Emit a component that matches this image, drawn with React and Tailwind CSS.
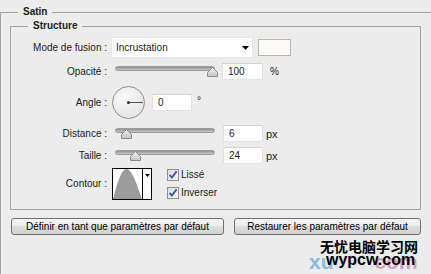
import React from "react";

function Slider({ pct }) {
  return (
    <div className="relative w-[100px] h-[17px] shrink-0">
      <div className="absolute left-0 right-0 top-[3px] h-[5px] rounded-full bg-gradient-to-b from-[#8e8e8e] to-[#c9c9c9] border border-[#9a9a9a]" />
      <svg
        className="absolute top-[4px]"
        style={{ left: `calc(${pct}% - ${pct * 0.08}px)` }}
        width="11"
        height="10"
        viewBox="0 0 11 10"
      >
        <defs>
          <linearGradient id="thumbg" x1="0" y1="0" x2="0" y2="1">
            <stop offset="0" stopColor="#f2f2f2" />
            <stop offset="1" stopColor="#c4c4c4" />
          </linearGradient>
        </defs>
        <path d="M5.5 0.5 L10.5 5.5 L10.5 9.5 L0.5 9.5 L0.5 5.5 Z" fill="url(#thumbg)" stroke="#8c8c8c" strokeWidth="1" />
      </svg>
    </div>
  );
}

function NumBox({ value, w = "w-[41px]" }) {
  return (
    <div className={`${w} h-[17px] shrink-0 bg-white border border-[#e2e2e2] border-t-[#d4d4d4] pl-[5px] leading-[15px]`}>
      {value}
    </div>
  );
}

function Check({ label }) {
  return (
    <div className="flex items-center h-[12px]">
      <svg width="12" height="12" viewBox="0 0 12 12" className="shrink-0">
        <defs>
          <linearGradient id="chk" x1="0" y1="0" x2="1" y2="1">
            <stop offset="0" stopColor="#dcdcdc" />
            <stop offset="1" stopColor="#fbfbfb" />
          </linearGradient>
        </defs>
        <rect x="0.5" y="0.5" width="11" height="11" fill="url(#chk)" stroke="#8e8f8f" />
        <path d="M2.6 6 L4.9 8.6 L9.6 2.4" fill="none" stroke="#3d5aa8" strokeWidth="1.9" />
      </svg>
      <span className="ml-[2px]">{label}</span>
    </div>
  );
}

export default function App() {
  return (
    <div className="relative w-[431px] h-[274px] overflow-hidden bg-[#ececec] font-['Liberation_Sans',Arial,sans-serif] text-[10px] text-[#1b1b1b] leading-[12px]">
      <fieldset className="mt-[6px] w-[460px] min-h-[300px] border-l border-t border-[#a3a3a3] pl-[9px] pt-[2px]">
        <legend className="ml-[8px] px-[5px] font-bold leading-[12px]">Satin</legend>

        <fieldset className="w-[411px] border border-[#a3a3a3] pb-[9px]">
          <legend className="ml-[17px] px-[5px] font-bold leading-[12px]">Structure</legend>

          {/* Mode de fusion */}
          <div className="flex items-center mt-[5px] h-[21px]">
            <span className="w-[96px] text-right">Mode de fusion :</span>
            <div className="ml-[4px] w-[142px] h-[21px] bg-white border border-[#e6e6e6] flex items-center justify-between pl-[4px] pr-[3px]">
              <span>Incrustation</span>
              <svg width="7" height="4" viewBox="0 0 7 4"><path d="M0 0 H7 L3.5 4 Z" fill="#000" /></svg>
            </div>
            <div className="ml-[5px] w-[33px] h-[17px] bg-[#fcfaf6] border border-[#b6b6b6]" />
          </div>

          {/* Opacité */}
          <div className="flex items-center mt-[5px] h-[17px]">
            <span className="w-[96px] text-right">Opacité :</span>
            <div className="ml-[8px]"><Slider pct={100} /></div>
            <div className="ml-[7px]"><NumBox value="100" /></div>
            <span className="ml-[7px]">%</span>
          </div>

          {/* Angle */}
          <div className="flex items-center mt-[6px] h-[33px]">
            <span className="w-[96px] text-right">Angle :</span>
            <div className="ml-[5px] w-[33px] h-[33px] shrink-0 rounded-full border border-[#8d8d8d] bg-[radial-gradient(circle_at_40%_35%,#fafafa,#dedede)] flex items-center">
              <svg width="31" height="31" viewBox="0 0 31 31">
                <line x1="15.5" y1="15.5" x2="30" y2="15.5" stroke="#555" strokeWidth="1" />
                <circle cx="15.5" cy="15.5" r="1.6" fill="#333" />
              </svg>
            </div>
            <div className="ml-[7px]"><NumBox value="0" w="w-[40px]" /></div>
            <span className="ml-[5px] self-start mt-[9px]">°</span>
          </div>

          {/* Distance */}
          <div className="flex items-center mt-[6px] h-[17px]">
            <span className="w-[96px] text-right">Distance :</span>
            <div className="ml-[8px]"><Slider pct={6} /></div>
            <div className="ml-[8px]"><NumBox value="6" w="w-[40px]" /></div>
            <span className="ml-[3px] text-[11px]">px</span>
          </div>

          {/* Taille */}
          <div className="flex items-center mt-[5px] h-[17px]">
            <span className="w-[96px] text-right">Taille :</span>
            <div className="ml-[8px]"><Slider pct={16} /></div>
            <div className="ml-[8px]"><NumBox value="24" w="w-[40px]" /></div>
            <span className="ml-[3px] text-[11px]">px</span>
          </div>

          {/* Contour */}
          <div className="flex items-center mt-[4px] h-[32px]">
            <span className="w-[96px] text-right">Contour :</span>
            <div className="ml-[5px] w-[40px] h-[32px] shrink-0 border border-black bg-white flex">
              <svg width="29" height="30" viewBox="0 0 29 30" className="shrink-0">
                <path d="M0 30 C4 16 8 0 13.5 0 C19 0 24 16 29 30 Z" fill="#9b9b9b" />
              </svg>
              <div className="w-px bg-black" />
              <div className="flex-1 flex justify-center pt-[5px]">
                <svg width="5" height="3" viewBox="0 0 5 3"><path d="M0 0 H5 L2.5 3 Z" fill="#000" /></svg>
              </div>
            </div>
            <div className="ml-[15px] flex flex-col gap-[6px]">
              <Check label="Lissé" />
              <Check label="Inverser" />
            </div>
          </div>
        </fieldset>

        <div className="flex mt-[8px] ml-[1px] gap-[10px]">
          <button className="w-[213px] h-[17px] rounded-[3px] border border-[#707070] bg-[linear-gradient(#f3f3f3_0%,#ececec_50%,#dedede_50%,#d0d0d0_100%)] text-[10px] leading-[15px] text-black">
            Définir en tant que paramètres par défaut
          </button>
          <button className="w-[187px] h-[17px] rounded-[3px] border border-[#707070] bg-[linear-gradient(#f3f3f3_0%,#ececec_50%,#dedede_50%,#d0d0d0_100%)] text-[10px] leading-[15px] text-black">
            Restaurer les paramètres par défaut
          </button>
        </div>
      </fieldset>

      {/* watermark */}
      <div className="absolute left-[309px] top-[251px] text-[21px] font-bold leading-[22px] whitespace-nowrap opacity-80">
        <span className="text-[#6db3dc]">xu</span>
        <span className="text-[#d6e4ec]">e51.</span>
        <span className="text-[#da86b6]">com</span>
      </div>
      <div className="absolute left-[320px] top-[238px] text-[14px] font-bold leading-[16px] text-black font-['Noto_Sans_CJK_SC',sans-serif] whitespace-nowrap">
        无忧电脑学习网
      </div>
      <div className="absolute left-[326px] top-[250px] text-[16px] font-bold leading-[20px] text-black whitespace-nowrap">
        wypcw.com
      </div>
    </div>
  );
}
